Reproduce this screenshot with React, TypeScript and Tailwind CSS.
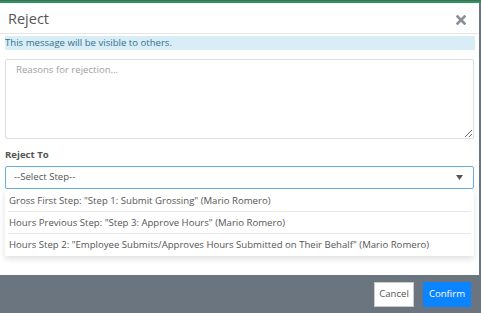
import React from 'react'

const steps = [
  'Gross First Step: "Step 1: Submit Grossing" (Mario Romero)',
  'Hours Previous Step: "Step 3: Approve Hours" (Mario Romero)',
  'Hours Step 2: "Employee Submits/Approves Hours Submitted on Their Behalf" (Mario Romero)',
]

export default function App() {
  return (
    <div
      className="flex h-[313px] w-[481px] flex-col overflow-hidden bg-[#6b7580]"
      style={{ fontFamily: '"Open Sans", "Noto Sans", sans-serif' }}
    >
      <div className="h-px w-full bg-[#5b5f63]" />
      <div className="h-[2px] w-full bg-[#1e9e57]" />

      <div className="flex h-[272px] w-[479px] flex-col bg-white">
        {/* header */}
        <div className="flex h-[31px] items-center justify-between border-b border-[#e5e5e5] pl-2 pr-[13px] pt-[3px]">
          <span className="text-[14.5px] leading-none text-[#555]">Reject</span>
          <svg width="10" height="10" viewBox="0 0 10 10">
            <path d="M1.5 1.5 L8.5 8.5 M8.5 1.5 L1.5 8.5" stroke="#8a8f94" strokeWidth="2.6" strokeLinecap="square" />
          </svg>
        </div>

        <div className="flex flex-col px-[5px]">
          <div className="mt-[2px] flex h-[14px] w-[470px] items-center bg-[#d9edf7] text-[9.6px] leading-none text-[#31708f]">
            This message will be visible to others.
          </div>

          <textarea
            placeholder="Reasons for rejection..."
            className="mt-[9px] h-[80px] w-[469px] resize-y rounded-[2px] border border-[#ddd] px-[10px] py-[3px] text-[9.6px] text-[#555] outline-none placeholder:text-[#a0a0a0]"
          />

          <div className="mt-[11px] text-[9.6px] font-bold leading-none text-[#555]">Reject To</div>

          <div className="relative mt-[6px] w-[469px]">
            <div className="flex h-[23px] items-center justify-between rounded-[2px] border border-[#66afe9] pl-[8px] pr-[10px] text-[9.6px] text-[#555]">
              <span>--Select Step--</span>
              <svg width="7" height="5" viewBox="0 0 7 5">
                <path d="M0 0 H7 L3.5 5 Z" fill="#555" />
              </svg>
            </div>
            <div className="flex flex-col bg-white px-[3px] pt-[1px] shadow-[0_3px_6px_rgba(0,0,0,0.12)]">
              {steps.map((s, i) => (
                <div
                  key={s}
                  className={
                    'flex h-[22px] items-center pl-[1px] pt-[2px] text-[9.6px] text-[#555] ' +
                    (i < steps.length - 1 ? 'border-b border-[#e8e8e8]' : '')
                  }
                >
                  {s}
                </div>
              ))}
            </div>
          </div>
        </div>
      </div>

      <div className="flex flex-1 items-center justify-end gap-[9px] pr-[10px]">
        <button className="h-[25px] w-[40px] border border-[#ccc] bg-white text-[9.6px] text-[#555]">Cancel</button>
        <button className="h-[25px] w-[48px] bg-[#0a84ff] text-[9.6px] text-white">Confirm</button>
      </div>
    </div>
  )
}
